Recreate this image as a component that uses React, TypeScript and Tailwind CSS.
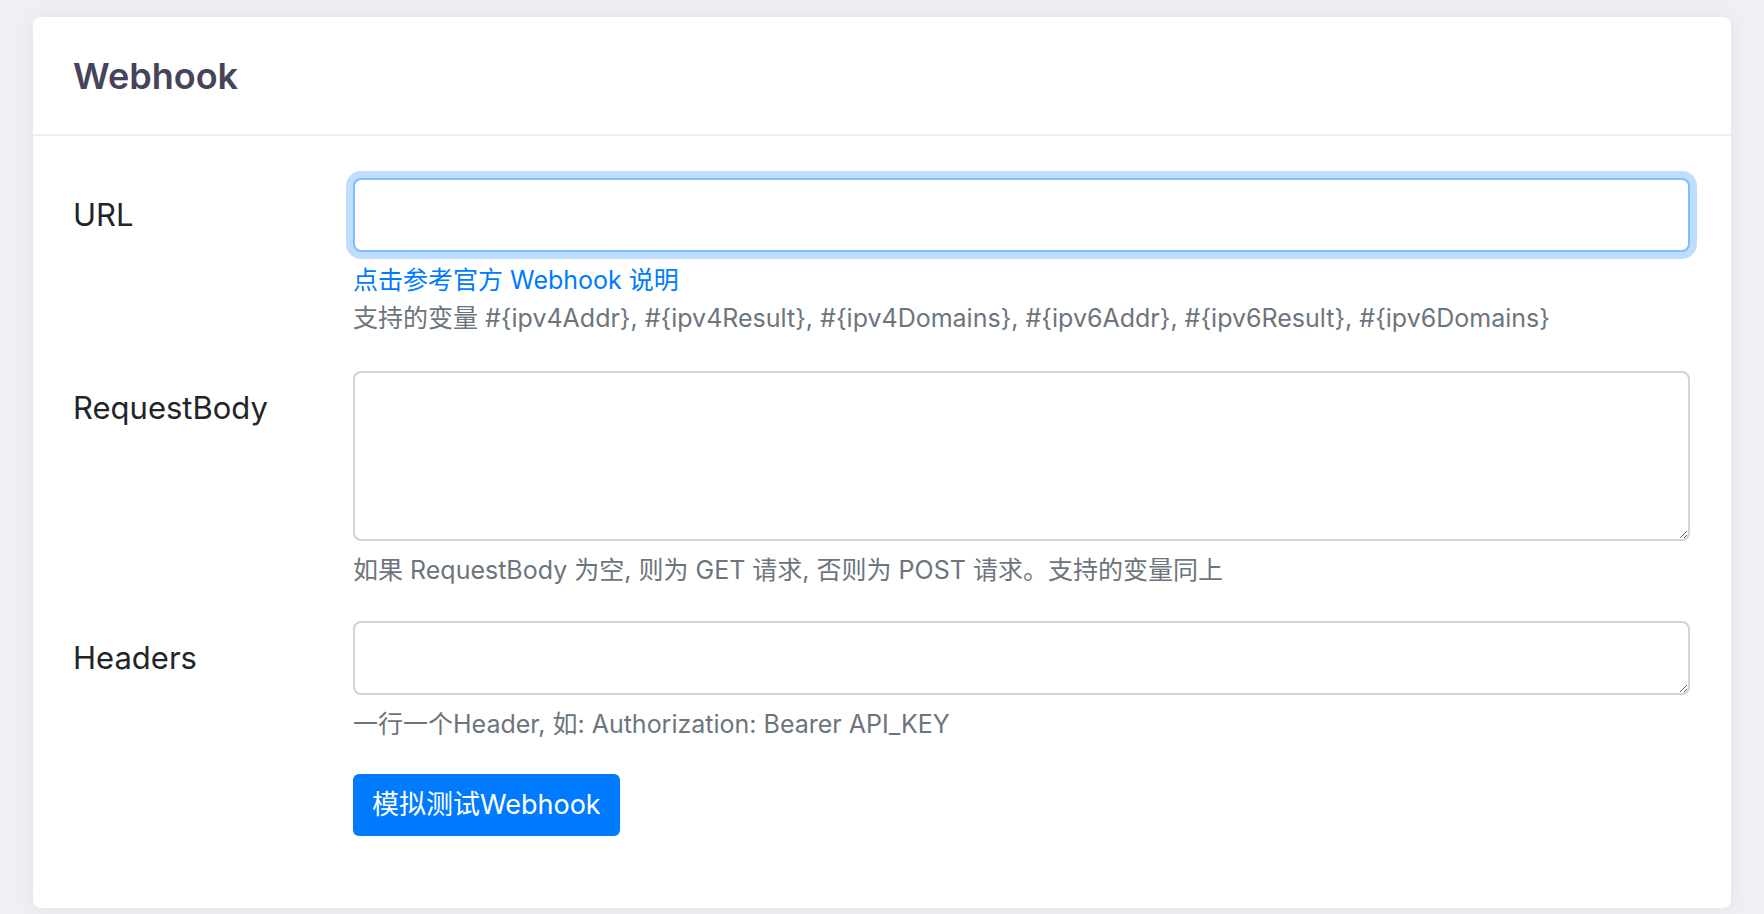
import React from 'react'

const helpText = 'text-[25px] leading-[38px] text-[#6c757d]'

function FieldLabel({ children }: { children: React.ReactNode }) {
  return (
    <div className="flex h-[74px] w-[280px] shrink-0 items-center text-[31px] text-[#212529]">
      {children}
    </div>
  )
}

export default function App() {
  return (
    <div className="min-h-screen bg-[#eef0f5] px-[33px] pt-[17px] pb-[6px] font-['Inter','Noto_Sans_CJK_SC',sans-serif]">
      <div className="rounded-[8px] bg-white shadow-[0_0_24px_rgba(30,40,90,0.06)]">
        <div className="flex h-[119px] items-center border-b-2 border-[#eceef3] px-[40px]">
          <h1 className="text-[36px] font-semibold text-[#45445a]">Webhook</h1>
        </div>

        <div className="pr-[41px] pl-[40px] pt-[42px] pb-[72px]">
          <div className="flex">
            <FieldLabel>URL</FieldLabel>
            <div className="flex-1">
              <input
                type="text"
                className="block h-[74px] w-full rounded-[8px] border-2 border-[#80bdff] bg-white px-[23px] text-[31px] shadow-[0_0_0_7px_rgba(0,123,255,0.25)] outline-none"
              />
              <div className="mt-[9px] text-[25px] leading-[38px] text-[#007bff]">
                点击参考官方 Webhook 说明
              </div>
              <div className={helpText}>
                支持的变量 #&#123;ipv4Addr&#125;, #&#123;ipv4Result&#125;, #&#123;ipv4Domains&#125;, #&#123;ipv6Addr&#125;, #&#123;ipv6Result&#125;, #&#123;ipv6Domains&#125;
              </div>
            </div>
          </div>

          <div className="mt-[34px] flex">
            <FieldLabel>RequestBody</FieldLabel>
            <div className="flex-1">
              <textarea className="block h-[170px] w-full rounded-[8px] border-2 border-[#ced4da] bg-white px-[23px] py-[11px] text-[31px] outline-none" />
              <div className={`mt-[10px] ${helpText}`}>
                如果 RequestBody 为空, 则为 GET 请求, 否则为 POST 请求。支持的变量同上
              </div>
            </div>
          </div>

          <div className="mt-[32px] flex">
            <FieldLabel>Headers</FieldLabel>
            <div className="flex-1">
              <textarea className="block h-[74px] w-full rounded-[8px] border-2 border-[#ced4da] bg-white px-[23px] py-[11px] text-[31px] outline-none" />
              <div className={`mt-[10px] ${helpText}`}>
                一行一个Header, 如: Authorization: Bearer API_KEY
              </div>
              <button
                type="button"
                className="mt-[31px] h-[62px] rounded-[6px] bg-[#007bff] px-[19px] text-[27px] text-white"
              >
                模拟测试Webhook
              </button>
            </div>
          </div>
        </div>
      </div>
    </div>
  )
}
